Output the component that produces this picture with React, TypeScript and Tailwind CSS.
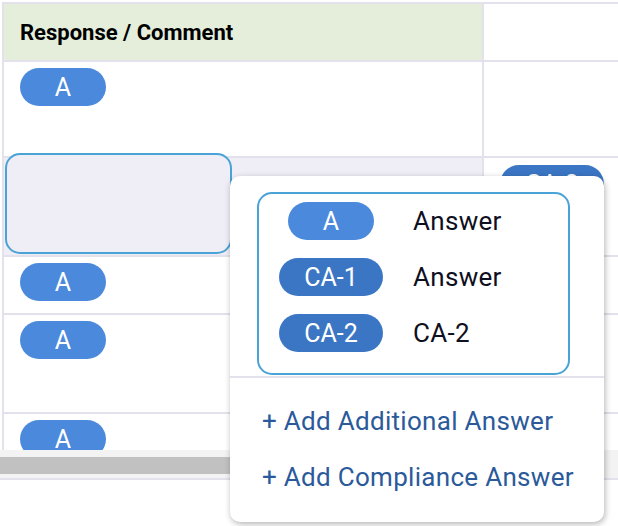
import React from "react";

const LINE = "border-[#e3e1eb]";

function Badge({ label, dark, w }: { label: string; dark?: boolean; w: string }) {
  return (
    <div
      className={`${w} h-[38px] rounded-full flex items-center justify-center text-white text-[25px] leading-none ${
        dark ? "bg-[#3b76c4]" : "bg-[#4a89dc]"
      }`}
    >
      {label}
    </div>
  );
}

export default function App() {
  return (
    <div className="relative w-[618px] h-[526px] overflow-hidden bg-white font-['Roboto',sans-serif]">
      <div className="pt-[2px]">
        <div className={`h-[448px] overflow-hidden ml-[2px] w-[800px] border-l-2 border-t-2 ${LINE}`}>
          {/* header */}
          <div className={`flex h-[58px] border-b-2 ${LINE}`}>
            <div className={`w-[480px] border-r-2 ${LINE} bg-[#e4eedb] flex items-center pl-[16px]`}>
              <span className="text-[22px] font-bold text-black">Response / Comment</span>
            </div>
            <div className="flex-1" />
          </div>
          {/* row 1 */}
          <div className={`flex h-[96px] border-b-2 ${LINE}`}>
            <div className={`w-[480px] border-r-2 ${LINE} pt-[6px] pl-[16px]`}>
              <Badge label="A" w="w-[86px]" />
            </div>
            <div className="flex-1" />
          </div>
          {/* row 2 (selected) */}
          <div className={`flex h-[99px] border-b-2 ${LINE}`}>
            <div className={`relative w-[480px] border-r-2 ${LINE} bg-[#efeef6]`}>
              <div className="absolute left-[1px] -top-[5px] w-[227px] h-[101px] rounded-[15px] border-2 border-[#4aa3d6] bg-[#efeef6]" />
            </div>
            <div className="flex-1 pt-[7px] pl-[16px]">
              <Badge label="CA-2" dark w="w-[104px]" />
            </div>
          </div>
          {/* row 3 */}
          <div className={`flex h-[58px] border-b-2 ${LINE}`}>
            <div className={`w-[480px] border-r-2 ${LINE} pt-[6px] pl-[16px]`}>
              <Badge label="A" w="w-[86px]" />
            </div>
            <div className="flex-1" />
          </div>
          {/* row 4 */}
          <div className={`flex h-[99px] border-b-2 ${LINE}`}>
            <div className={`w-[480px] border-r-2 ${LINE} pt-[6px] pl-[16px]`}>
              <Badge label="A" w="w-[86px]" />
            </div>
            <div className="flex-1" />
          </div>
          {/* row 5 */}
          <div className="flex h-[96px]">
            <div className={`w-[480px] border-r-2 ${LINE} pt-[6px] pl-[16px]`}>
              <Badge label="A" w="w-[86px]" />
            </div>
            <div className="flex-1" />
          </div>
        </div>
        {/* horizontal scrollbar */}
        <div className={`h-[30px] bg-[#f3f3f3] border-b-2 ${LINE} pt-[7px]`}>
          <div className="w-[520px] h-[17px] bg-[#c1c1c1]" />
        </div>
      </div>

      {/* popup */}
      <div className="absolute left-[230px] top-[176px] w-[374px] h-[346px] bg-white rounded-[10px] shadow-[1px_2px_6px_rgba(0,0,0,0.3)]">
        <div className="pt-[16px] pl-[27px]">
          <div className="w-[313px] h-[183px] border-2 border-[#4aa3d6] rounded-[15px] pt-[8px] pl-[19px] flex flex-col gap-[18px]">
            {[
              { b: "A", dark: false, w: "w-[86px]", t: "Answer" },
              { b: "CA-1", dark: true, w: "w-[104px]", t: "Answer" },
              { b: "CA-2", dark: true, w: "w-[104px]", t: "CA-2" },
            ].map((r) => (
              <div key={r.b} className="flex items-center gap-[29px] h-[38px]">
                <div className="w-[106px] flex justify-center">
                  <Badge label={r.b} dark={r.dark} w={r.w} />
                </div>
                <span className="text-[26px] leading-none tracking-[0.3px] text-[#0f0f22]">{r.t}</span>
              </div>
            ))}
          </div>
        </div>
        <div className={`mt-[1px] border-t-2 ${LINE} pt-[28px] pl-[32px] flex flex-col gap-[26px]`}>
          <div className="text-[26px] leading-[30px] tracking-[0.3px] text-[#2b5a9b]">+ Add Additional Answer</div>
          <div className="text-[26px] leading-[30px] tracking-[0.3px] text-[#2b5a9b]">+ Add Compliance Answer</div>
        </div>
      </div>
    </div>
  );
}
